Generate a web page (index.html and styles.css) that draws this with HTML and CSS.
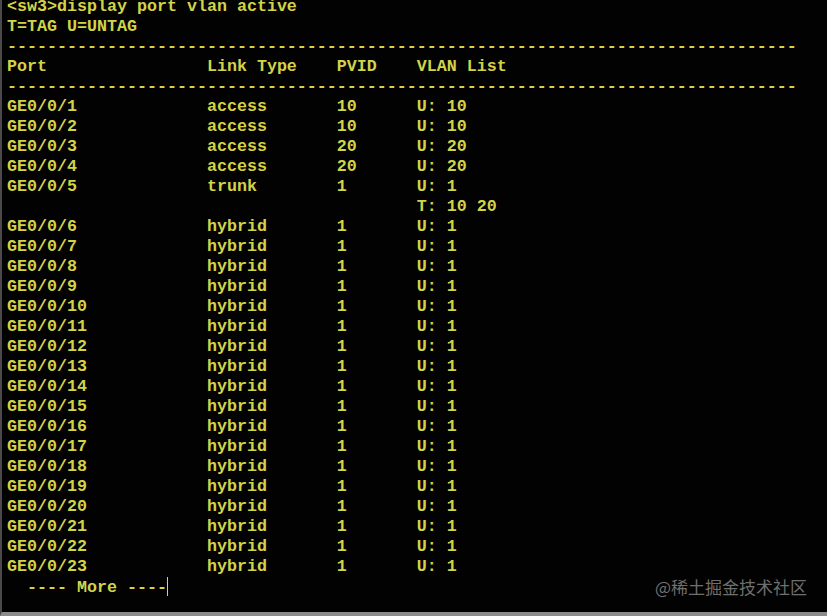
FILE: index.html
```html
<!DOCTYPE html>
<html>
<head>
<meta charset="utf-8">
<link rel="stylesheet" href="styles.css">
</head>
<body>
<div class="term">
<pre class="out">&lt;sw3&gt;display port vlan active
T=TAG U=UNTAG
-------------------------------------------------------------------------------
Port                Link Type    PVID    VLAN List
-------------------------------------------------------------------------------
GE0/0/1             access       10      U: 10
GE0/0/2             access       10      U: 10
GE0/0/3             access       20      U: 20
GE0/0/4             access       20      U: 20
GE0/0/5             trunk        1       U: 1
                                         T: 10 20
GE0/0/6             hybrid       1       U: 1
GE0/0/7             hybrid       1       U: 1
GE0/0/8             hybrid       1       U: 1
GE0/0/9             hybrid       1       U: 1
GE0/0/10            hybrid       1       U: 1
GE0/0/11            hybrid       1       U: 1
GE0/0/12            hybrid       1       U: 1
GE0/0/13            hybrid       1       U: 1
GE0/0/14            hybrid       1       U: 1
GE0/0/15            hybrid       1       U: 1
GE0/0/16            hybrid       1       U: 1
GE0/0/17            hybrid       1       U: 1
GE0/0/18            hybrid       1       U: 1
GE0/0/19            hybrid       1       U: 1
GE0/0/20            hybrid       1       U: 1
GE0/0/21            hybrid       1       U: 1
GE0/0/22            hybrid       1       U: 1
GE0/0/23            hybrid       1       U: 1
  ---- More ----<span class="cursor"></span></pre>
<div class="mark">@稀土掘金技术社区</div>
</div>
</body>
</html>
```
FILE: styles.css
```css
html, body {
  margin: 0;
  padding: 0;
  background: #000;
  overflow: hidden;
}
.term {
  position: relative;
  box-sizing: border-box;
  width: 827px;
  height: 616px;
  border-left: 2px solid #4a4a4a;
  border-bottom: 4px solid #8c8c8c;
  overflow: hidden;
  background: #020202;
}
.out {
  display: inline-block;
  margin: -3px 0 0 0;
  padding-left: 5px;
  font-family: "Liberation Mono", "Courier New", monospace;
  font-size: 16.67px;
  line-height: 20px;
  font-weight: bold;
  color: #d2d448;
  white-space: pre;
}
.cursor {
  display: inline-block;
  width: 1px;
  height: 19px;
  background: #c8c8c8;
  vertical-align: -4px;
}
.mark {
  position: absolute;
  right: 20px;
  bottom: 15px;
  font-family: "Noto Sans CJK SC", "Noto Sans", sans-serif;
  font-size: 17px;
  line-height: 20px;
  color: #6f6f6f;
}
```
